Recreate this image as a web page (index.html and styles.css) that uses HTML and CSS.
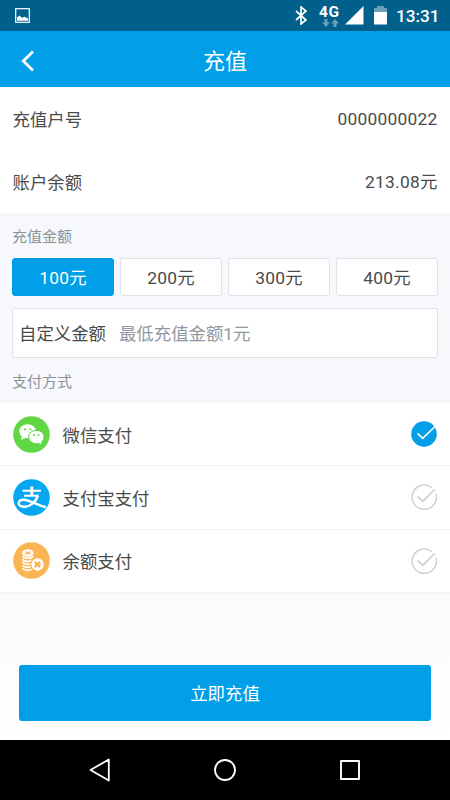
FILE: index.html
```html
<!DOCTYPE html>
<html lang="zh-CN">
<head>
<meta charset="utf-8">
<title>充值</title>
<link rel="stylesheet" href="styles.css">
</head>
<body>
<div class="status">
  <svg class="shot" width="15" height="15" viewBox="0 0 15 15"><rect x=".7" y=".7" width="13.6" height="13.6" fill="none" stroke="#fff" stroke-width="1.2"/><path d="M2 12.700V9.500L4.500 7.500 7 9.700 9.500 8.700 13 10.500v2.200z" fill="#fff"/></svg>
  <svg class="bt" width="12" height="19" viewBox="0 0 12 19"><path d="M1 5l10 9-5 4V1l5 4-10 9" fill="none" stroke="#fff" stroke-width="1.7"/></svg>
  <div class="net"><span class="net-label">4G</span>
    <svg width="17" height="8" viewBox="0 0 17 8"><path d="M2.5 0h3v3.5H8L4 8 0 3.5h2.5zM11.5 8h3V4.500H17L13 0 9 4.500h2.500z" fill="#6a9fba"/></svg>
  </div>
  <svg class="signal" width="19" height="19" viewBox="0 0 19 19"><path d="M0 18.500L18.500 0v18.500z" fill="#fff"/></svg>
  <svg class="battery" width="13" height="19" viewBox="0 0 13 19"><path d="M3 0h7v2h3v4H0V2h3z" fill="#6a9fba"/><path d="M0 6h13v12.500H0z" fill="#fff"/></svg>
  <span class="time">13:31</span>
</div>
<header class="bar">
  <svg class="back" width="14" height="22" viewBox="0 0 14 22"><path d="M12 1.500L2.300 11l9.700 9.500" fill="none" stroke="#fff" stroke-width="2.800"/></svg>
  <h1>充值</h1>
</header>
<main>
  <section class="info">
    <div class="info-row"><span>充值户号</span><span class="num">0000000022</span></div>
    <div class="info-row"><span>账户余额</span><span class="num">213.08元</span></div>
  </section>
  <section class="amount">
    <h2>充值金额</h2>
    <div class="options">
      <button class="option selected">100元</button>
      <button class="option">200元</button>
      <button class="option">300元</button>
      <button class="option">400元</button>
    </div>
    <div class="custom"><span>自定义金额</span><span class="hint">最低充值金额1元</span></div>
    <h2 class="methods-title">支付方式</h2>
  </section>
  <section class="methods">
    <div class="method">
      <svg width="37" height="37" viewBox="0 0 37 37">
        <circle cx="18.500" cy="18.500" r="18.300" fill="#60d645"/>
        <ellipse cx="14.600" cy="15.300" rx="8.300" ry="7" fill="#fff"/><path d="M9 19l-.8 5 5-2.500z" fill="#fff"/>
        <ellipse cx="23.300" cy="21" rx="7.800" ry="6.700" fill="#fff" stroke="#60d645"/><path d="M25 26.500l3.500 2-.5-4z" fill="#fff"/>
        <g fill="#60d645"><circle cx="12" cy="13.300" r="1.100"/><circle cx="17.500" cy="13.300" r="1.100"/><circle cx="20.800" cy="19" r="1"/><circle cx="25.700" cy="19" r="1"/></g>
      </svg>
      <span class="name">微信支付</span>
      <svg class="check" width="26" height="26" viewBox="0 0 26 26"><circle cx="13" cy="13" r="12.800" fill="#039fe8"/><path d="M6.500 12.300l5.200 5L24 5.500" fill="none" stroke="#fff" stroke-width="1.600"/></svg>
    </div>
    <div class="method">
      <svg width="37" height="37" viewBox="0 0 37 37">
        <circle cx="18.500" cy="18.500" r="18.300" fill="#05a7f0"/>
        <g fill="none" stroke="#fff"><path d="M9.500 11.700H28M11 16.700h14.500" stroke-width="2"/><path d="M18.800 7.500v9" stroke-width="3"/><path d="M25 16.700c-2 5.500-7 10.800-13 11-4 .1-6.500-1.300-6.400-3.600.1-2.300 2.500-3.600 5.400-3.300 6 .7 13.500 5.200 22 7.400" stroke-width="2.500"/></g>
      </svg>
      <span class="name">支付宝支付</span>
      <svg class="check" width="26" height="26" viewBox="0 0 26 26"><g fill="none" stroke="#c8ccd8"><path d="M20.700 3.500a12.200 12.200 0 1 0 4.200 6" stroke-width="1.400"/><path d="M6.500 12.300l5.300 5L23.500 5.500" stroke-width="1.600"/></g></svg>
    </div>
    <div class="method">
      <svg width="37" height="37" viewBox="0 0 37 37">
        <circle cx="18.500" cy="18.500" r="18.300" fill="#fab452"/>
        <g fill="none" stroke="#fff" stroke-width="1.700"><path d="M9.500 14c1 3 9 3 10.500 0M9.500 17c1 3 7.500 3 9 1M9.500 20c1 2.500 6 3 8 1.500M9.500 23c1 2.500 6 3 8 1.500M9.500 26c1 2.500 6.500 3 9 1.300"/></g>
        <ellipse cx="14.800" cy="11" rx="5.700" ry="3.800" fill="#fff"/><path d="M12.200 9.500l5.200 3m0-3l-5.200 3" stroke="#fab452" stroke-width="1.400"/>
        <circle cx="24.500" cy="22.500" r="6.800" fill="#fff" stroke="#fab452" stroke-width="1.200"/><path d="M21.800 19.800l5.400 5.400m0-5.400l-5.400 5.400" stroke="#fab452" stroke-width="2.500"/>
      </svg>
      <span class="name">余额支付</span>
      <svg class="check" width="26" height="26" viewBox="0 0 26 26"><g fill="none" stroke="#c8ccd8"><path d="M20.700 3.500a12.200 12.200 0 1 0 4.200 6" stroke-width="1.400"/><path d="M6.500 12.300l5.300 5L23.500 5.500" stroke-width="1.600"/></g></svg>
    </div>
  </section>
  <div class="submit-area"><button class="submit">立即充值</button></div>
</main>
<nav class="nav">
  <svg width="24" height="26" viewBox="0 0 24 26"><path d="M20.800 2.500v21L2.500 13z" fill="none" stroke="#fff" stroke-width="1.800" stroke-linejoin="round"/></svg>
  <svg width="24" height="26" viewBox="0 0 24 26"><circle cx="12" cy="13" r="10" fill="none" stroke="#fff" stroke-width="1.800"/></svg>
  <svg width="24" height="26" viewBox="0 0 24 26"><rect x="3" y="4" width="18" height="18" fill="none" stroke="#fff" stroke-width="1.900" stroke-linejoin="round"/></svg>
</nav>
</body>
</html>
```
FILE: styles.css
```css
* { box-sizing: border-box; }
body {
  margin: 0;
  width: 450px;
  height: 800px;
  overflow: hidden;
  display: flex;
  flex-direction: column;
  background: #fff;
  color: #4a4a4a;
  font-family: Roboto, "Noto Sans CJK SC", sans-serif;
  font-size: 17.4px;
}
h1, h2 { margin: 0; font-weight: 400; }
button { font: inherit; padding: 0; }
svg { display: block; flex: none; }

.status {
  height: 31px;
  flex: none;
  background: #005f8b;
  color: #fff;
  display: flex;
  align-items: flex-start;
  padding: 6px 11px 0 15px;
}
.shot { margin-top: 2px; }
.bt { margin-left: auto; }
.net { width: 21px; margin: -1px 0 0 12px; }
.net-label { display: block; font-size: 15.500px; font-weight: 700; line-height: 14px; letter-spacing: .5px; }
.net svg { margin-left: 3px; }
.signal { margin-left: 5px; }
.battery { margin-left: 10px; }
.time { width: 43px; margin-left: 9px; font-size: 17.200px; font-weight: 500; line-height: 21px; }

.bar {
  height: 56px;
  flex: none;
  background: #029fe9;
  color: #fff;
  display: grid;
  grid-template-columns: 60px 1fr 60px;
  align-items: center;
}
.back { margin: 0 0 0 21px; }
.bar h1 { font-size: 22px; text-align: center; line-height: 56px; padding-top: 3px; }

main { flex: 1; display: flex; flex-direction: column; min-height: 0; }
.info { height: 126px; flex: none; padding: 1px 12.500px 0; }
.info-row { display: flex; justify-content: space-between; height: 62.500px; line-height: 64px; }
.num { letter-spacing: .22px; line-height: 63px; }

.amount { height: 190px; flex: none; background: #f6f8fc; padding: 0 12px; }
.amount h2 { height: 45px; font-size: 15px; line-height: 48px; color: #8d9299; }
.options { display: grid; grid-template-columns: repeat(4, 1fr); gap: 6px; height: 38px; }
.option {
  border: 1px solid #dce1eb;
  border-radius: 3px;
  background: #fff;
  color: #4a4a4a;
  letter-spacing: .2px;
  padding-bottom: 2px;
}
.option.selected { background: #029fe9; border-color: #029fe9; color: #fff; }
.custom {
  height: 50px;
  margin-top: 12px;
  border: 1px solid #dce1eb;
  border-radius: 3px;
  background: #fff;
  line-height: 51px;
  display: flex;
  gap: 13px;
  padding-left: 6px;
}
.hint { color: #92979e; }
.amount .methods-title { line-height: 48px; }

.method {
  height: 63.300px;
  border-bottom: 1px solid #f2f4f9;
  display: flex;
  align-items: center;
  padding: 0 13px 0 12.500px;
}
.name { margin-left: 13px; }
.check { margin-left: auto; }

.submit-area {
  flex: 1;
  border-top: 1px solid #f3f6fa;
  background: linear-gradient(#fafafa, #fff);
  padding: 71px 19px 0;
}
.submit {
  display: block;
  width: 100%;
  height: 56px;
  border: 0;
  border-radius: 3px;
  background: #029fe9;
  color: #fff;
}

.nav {
  height: 60px;
  flex: none;
  background: #000;
  display: flex;
  justify-content: center;
  align-items: center;
  gap: 101px;
}
```
